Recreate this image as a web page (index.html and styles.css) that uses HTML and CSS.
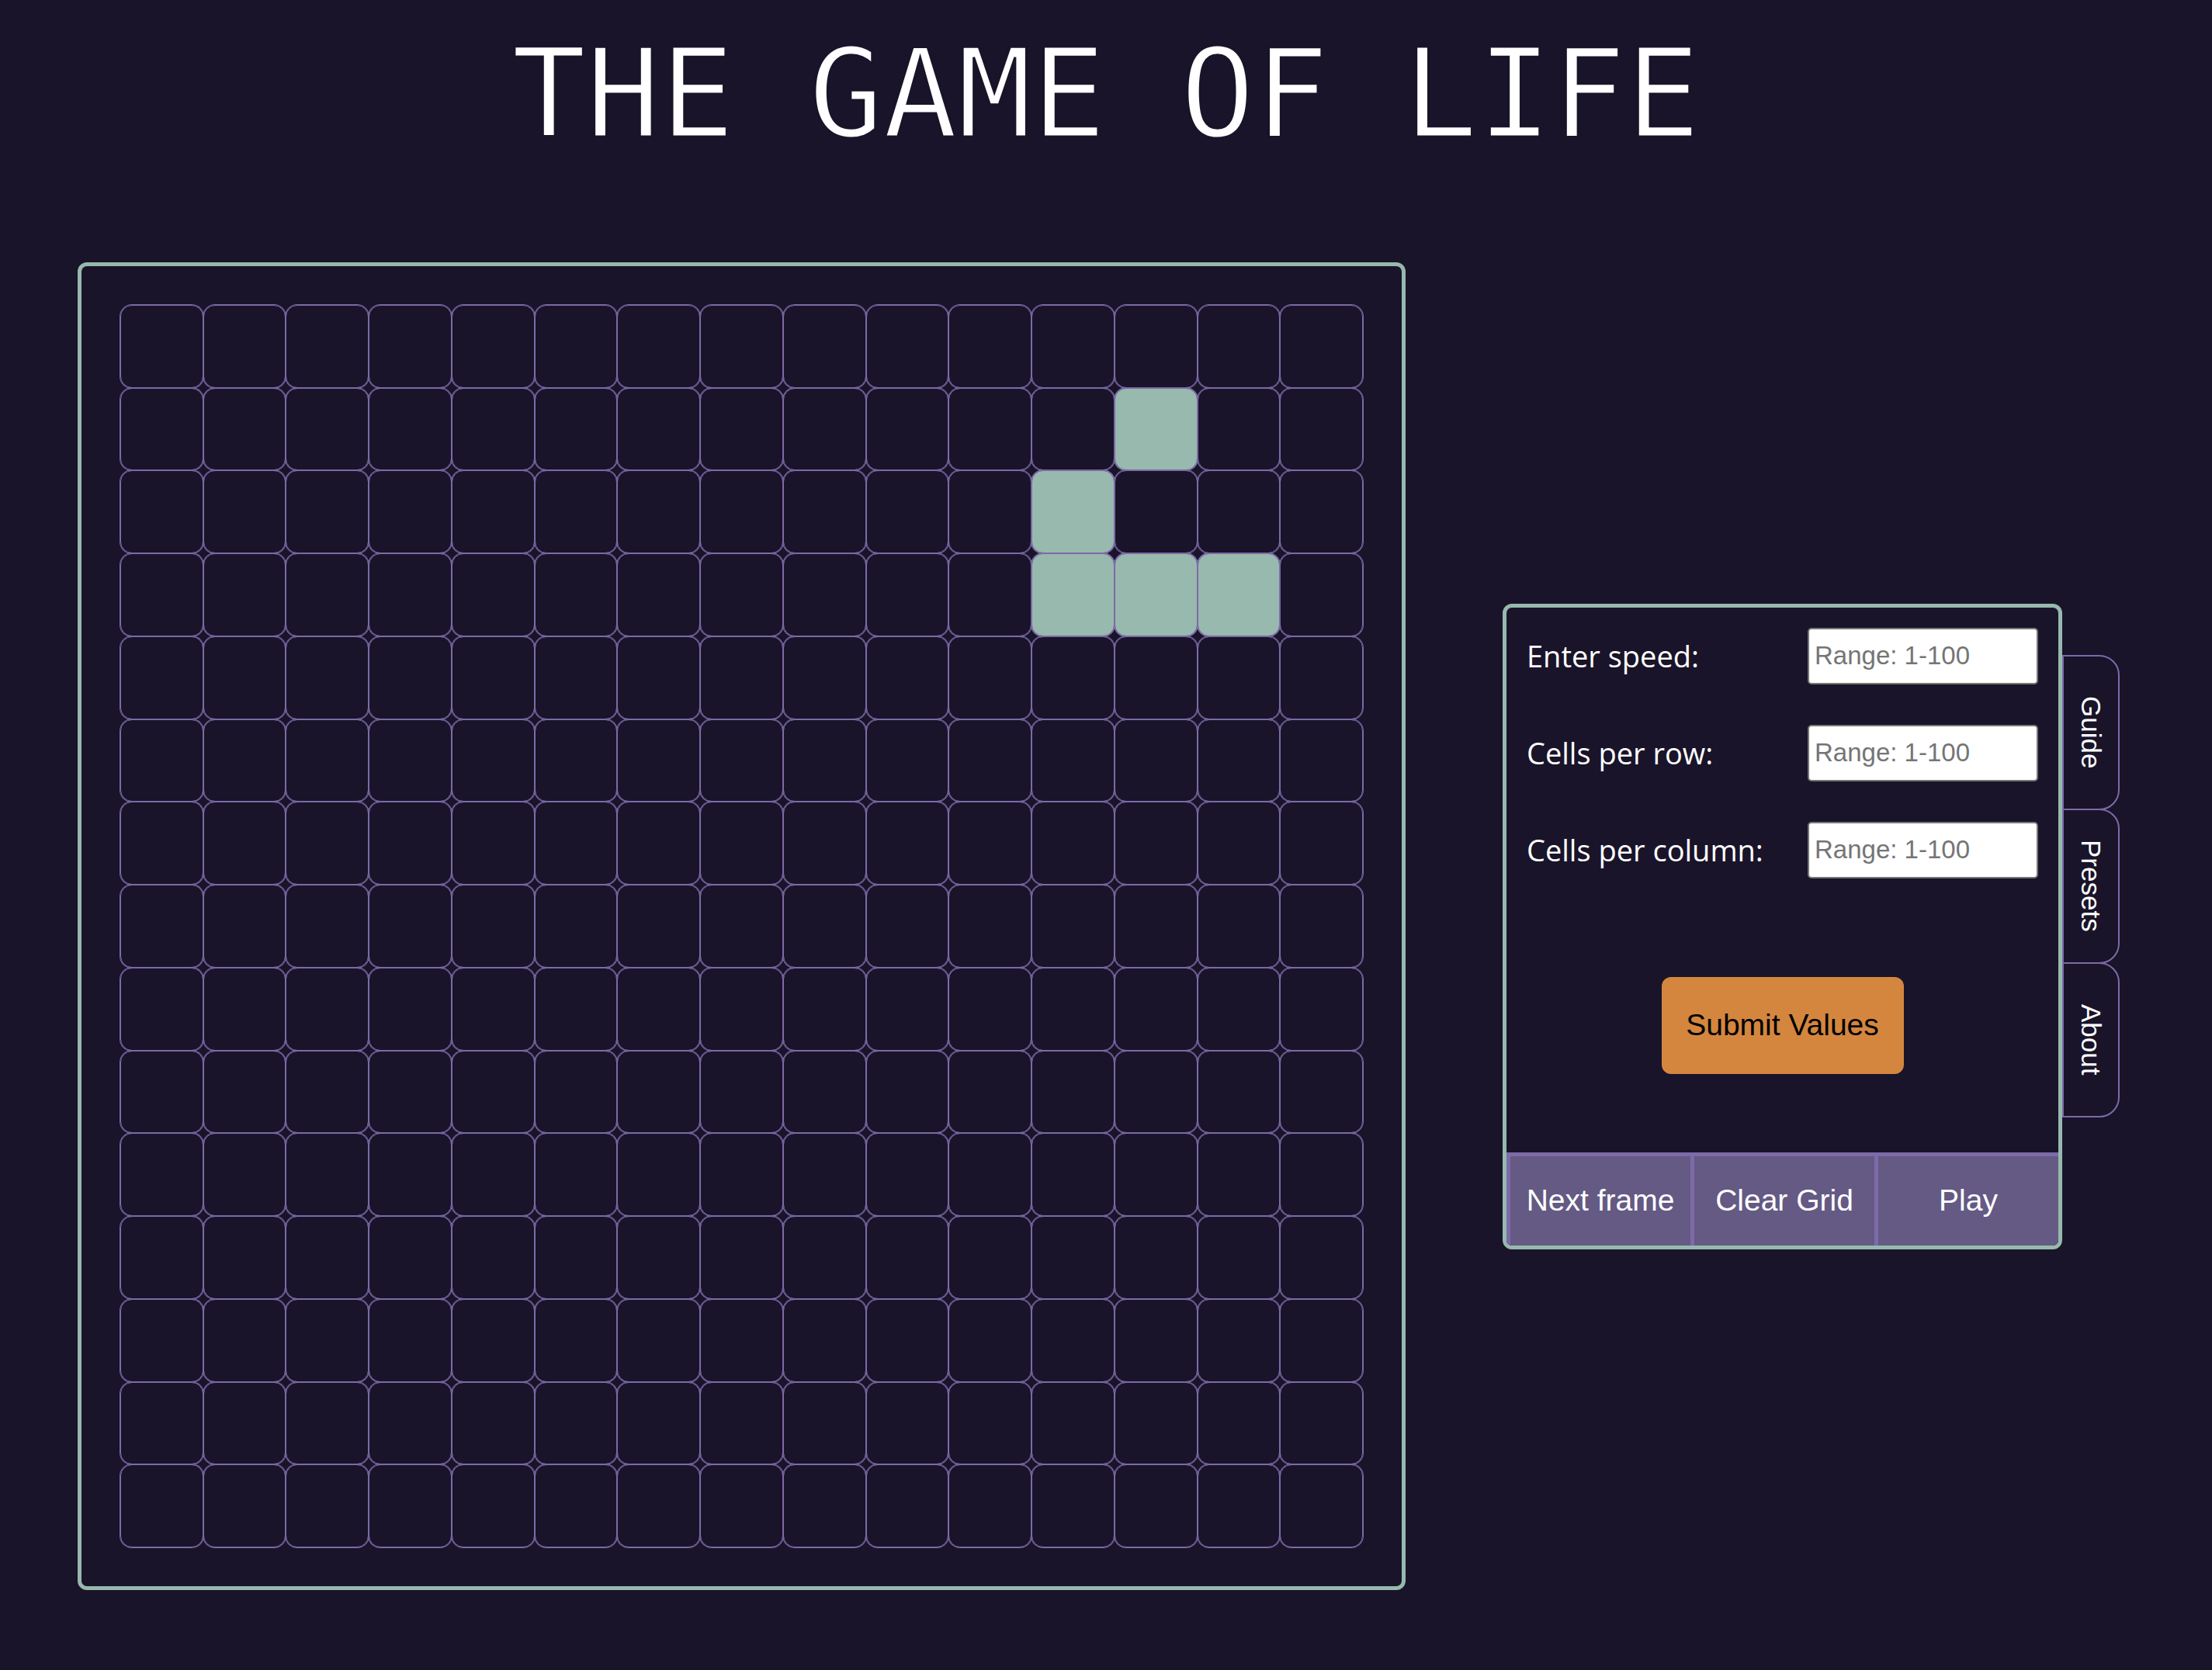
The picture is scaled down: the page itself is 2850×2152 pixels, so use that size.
FILE: index.html
```html
<!DOCTYPE html>
<html lang="en">
<head>
<meta charset="utf-8">
<title>The Game of Life</title>
<link rel="stylesheet" href="styles.css">
</head>
<body>
<h1 class="title">THE GAME OF LIFE</h1>
<main class="main">
  <section class="board">
    <div class="grid">
      <div class="cell"></div><div class="cell"></div><div class="cell"></div><div class="cell"></div><div class="cell"></div><div class="cell"></div><div class="cell"></div><div class="cell"></div><div class="cell"></div><div class="cell"></div><div class="cell"></div><div class="cell"></div><div class="cell"></div><div class="cell"></div><div class="cell"></div>
      <div class="cell"></div><div class="cell"></div><div class="cell"></div><div class="cell"></div><div class="cell"></div><div class="cell"></div><div class="cell"></div><div class="cell"></div><div class="cell"></div><div class="cell"></div><div class="cell"></div><div class="cell"></div><div class="cell alive"></div><div class="cell"></div><div class="cell"></div>
      <div class="cell"></div><div class="cell"></div><div class="cell"></div><div class="cell"></div><div class="cell"></div><div class="cell"></div><div class="cell"></div><div class="cell"></div><div class="cell"></div><div class="cell"></div><div class="cell"></div><div class="cell alive"></div><div class="cell"></div><div class="cell"></div><div class="cell"></div>
      <div class="cell"></div><div class="cell"></div><div class="cell"></div><div class="cell"></div><div class="cell"></div><div class="cell"></div><div class="cell"></div><div class="cell"></div><div class="cell"></div><div class="cell"></div><div class="cell"></div><div class="cell alive"></div><div class="cell alive"></div><div class="cell alive"></div><div class="cell"></div>
      <div class="cell"></div><div class="cell"></div><div class="cell"></div><div class="cell"></div><div class="cell"></div><div class="cell"></div><div class="cell"></div><div class="cell"></div><div class="cell"></div><div class="cell"></div><div class="cell"></div><div class="cell"></div><div class="cell"></div><div class="cell"></div><div class="cell"></div>
      <div class="cell"></div><div class="cell"></div><div class="cell"></div><div class="cell"></div><div class="cell"></div><div class="cell"></div><div class="cell"></div><div class="cell"></div><div class="cell"></div><div class="cell"></div><div class="cell"></div><div class="cell"></div><div class="cell"></div><div class="cell"></div><div class="cell"></div>
      <div class="cell"></div><div class="cell"></div><div class="cell"></div><div class="cell"></div><div class="cell"></div><div class="cell"></div><div class="cell"></div><div class="cell"></div><div class="cell"></div><div class="cell"></div><div class="cell"></div><div class="cell"></div><div class="cell"></div><div class="cell"></div><div class="cell"></div>
      <div class="cell"></div><div class="cell"></div><div class="cell"></div><div class="cell"></div><div class="cell"></div><div class="cell"></div><div class="cell"></div><div class="cell"></div><div class="cell"></div><div class="cell"></div><div class="cell"></div><div class="cell"></div><div class="cell"></div><div class="cell"></div><div class="cell"></div>
      <div class="cell"></div><div class="cell"></div><div class="cell"></div><div class="cell"></div><div class="cell"></div><div class="cell"></div><div class="cell"></div><div class="cell"></div><div class="cell"></div><div class="cell"></div><div class="cell"></div><div class="cell"></div><div class="cell"></div><div class="cell"></div><div class="cell"></div>
      <div class="cell"></div><div class="cell"></div><div class="cell"></div><div class="cell"></div><div class="cell"></div><div class="cell"></div><div class="cell"></div><div class="cell"></div><div class="cell"></div><div class="cell"></div><div class="cell"></div><div class="cell"></div><div class="cell"></div><div class="cell"></div><div class="cell"></div>
      <div class="cell"></div><div class="cell"></div><div class="cell"></div><div class="cell"></div><div class="cell"></div><div class="cell"></div><div class="cell"></div><div class="cell"></div><div class="cell"></div><div class="cell"></div><div class="cell"></div><div class="cell"></div><div class="cell"></div><div class="cell"></div><div class="cell"></div>
      <div class="cell"></div><div class="cell"></div><div class="cell"></div><div class="cell"></div><div class="cell"></div><div class="cell"></div><div class="cell"></div><div class="cell"></div><div class="cell"></div><div class="cell"></div><div class="cell"></div><div class="cell"></div><div class="cell"></div><div class="cell"></div><div class="cell"></div>
      <div class="cell"></div><div class="cell"></div><div class="cell"></div><div class="cell"></div><div class="cell"></div><div class="cell"></div><div class="cell"></div><div class="cell"></div><div class="cell"></div><div class="cell"></div><div class="cell"></div><div class="cell"></div><div class="cell"></div><div class="cell"></div><div class="cell"></div>
      <div class="cell"></div><div class="cell"></div><div class="cell"></div><div class="cell"></div><div class="cell"></div><div class="cell"></div><div class="cell"></div><div class="cell"></div><div class="cell"></div><div class="cell"></div><div class="cell"></div><div class="cell"></div><div class="cell"></div><div class="cell"></div><div class="cell"></div>
      <div class="cell"></div><div class="cell"></div><div class="cell"></div><div class="cell"></div><div class="cell"></div><div class="cell"></div><div class="cell"></div><div class="cell"></div><div class="cell"></div><div class="cell"></div><div class="cell"></div><div class="cell"></div><div class="cell"></div><div class="cell"></div><div class="cell"></div>
    </div>
  </section>

  <section class="panel">
    <div class="panel-body">
      <div class="field">
        <label class="label" for="speed">Enter speed:</label>
        <input class="input" id="speed" type="text" placeholder="Range: 1-100">
      </div>
      <div class="field">
        <label class="label" for="rows">Cells per row:</label>
        <input class="input" id="rows" type="text" placeholder="Range: 1-100">
      </div>
      <div class="field">
        <label class="label" for="cols">Cells per column:</label>
        <input class="input" id="cols" type="text" placeholder="Range: 1-100">
      </div>
      <button class="submit" type="button">Submit Values</button>
    </div>
    <div class="actions">
      <button class="action" type="button">Next frame</button>
      <button class="action" type="button">Clear Grid</button>
      <button class="action" type="button">Play</button>
    </div>
    <nav class="tabs">
      <div class="tab">Guide</div>
      <div class="tab">Presets</div>
      <div class="tab">About</div>
    </nav>
  </section>
</main>
</body>
</html>
```
FILE: styles.css
```css
* { box-sizing: border-box; }

html, body {
  margin: 0;
  padding: 0;
  background: #191429;
}

body {
  width: 2850px;
  min-height: 2152px;
  color: #fff;
}

.title {
  margin: 0;
  padding-top: 42px;
  font-family: "DejaVu Sans Mono", "Liberation Mono", monospace;
  font-weight: normal;
  font-size: 159px;
  line-height: 158px;
  text-align: center;
  color: #fff;
  -webkit-text-stroke: 3px #191429;
}

.main {
  display: flex;
  align-items: center;
  gap: 125px;
  padding-left: 100px;
  margin-top: 138px;
}

.board {
  width: 1711px;
  height: 1711px;
  border: 5px solid #97b9ad;
  border-radius: 12px;
  padding: 50px;
  flex: none;
}

.grid {
  width: 1601px;
  height: 1601px;
  display: grid;
  grid-template-columns: repeat(15, 1fr);
  grid-template-rows: repeat(15, 1fr);
}

.cell {
  border: 1px solid #7d6aa8;
  box-shadow: 0 0 0 1px #7d6aa8;
  border-radius: 15px;
}

.cell.alive {
  background: #98b9ae;
}

.panel {
  position: relative;
  flex: none;
  width: 721px;
  height: 832px;
  border: 5px solid #97b9ad;
  border-radius: 12px;
  display: flex;
  flex-direction: column;
}

.panel-body {
  padding: 26px 26px 0 26px;
  display: flex;
  flex-direction: column;
  gap: 52px;
}

.field {
  display: flex;
  align-items: center;
  justify-content: space-between;
  height: 73px;
}

.label {
  font-family: "Open Sans", "Noto Sans", sans-serif;
  font-size: 38px;
  color: #fff;
}

.input {
  width: 297px;
  height: 73px;
  border: 2px solid #767676;
  border-radius: 5px;
  background: #fff;
  padding: 0 7px;
  font-family: "Liberation Sans", Arial, sans-serif;
  font-size: 33px;
  color: #000;
}

.input::placeholder {
  color: #757575;
  font-family: "Liberation Sans", Arial, sans-serif;
}

.submit {
  align-self: center;
  margin-top: 75px;
  width: 312px;
  height: 125px;
  border: none;
  border-radius: 12px;
  background: #d4863f;
  color: #000;
  font-family: "Liberation Sans", Arial, sans-serif;
  font-size: 39px;
  padding: 0;
}

.actions {
  margin-top: auto;
  display: flex;
  height: 120px;
  border-radius: 0 0 7px 7px;
  overflow: hidden;
}

.action {
  flex: 1 1 0;
  border: none;
  border-top: 5px solid #7d6aa8;
  border-left: 5px solid #7d6aa8;
  background: #645a84;
  color: #fff;
  font-family: "Liberation Sans", Arial, sans-serif;
  font-size: 39px;
  padding: 0;
}

.tabs {
  position: absolute;
  left: calc(100% + 5px);
  top: 61px;
  display: flex;
  flex-direction: column;
}

.tab {
  width: 74px;
  height: 200px;
  border: 2px solid #7d6aa8;
  border-radius: 0 26px 26px 0;
  display: flex;
  align-items: center;
  justify-content: center;
  writing-mode: vertical-rl;
  font-family: "Liberation Sans", Arial, sans-serif;
  font-size: 35px;
  color: #fff;
}

.tab + .tab {
  margin-top: -2px;
}
```
